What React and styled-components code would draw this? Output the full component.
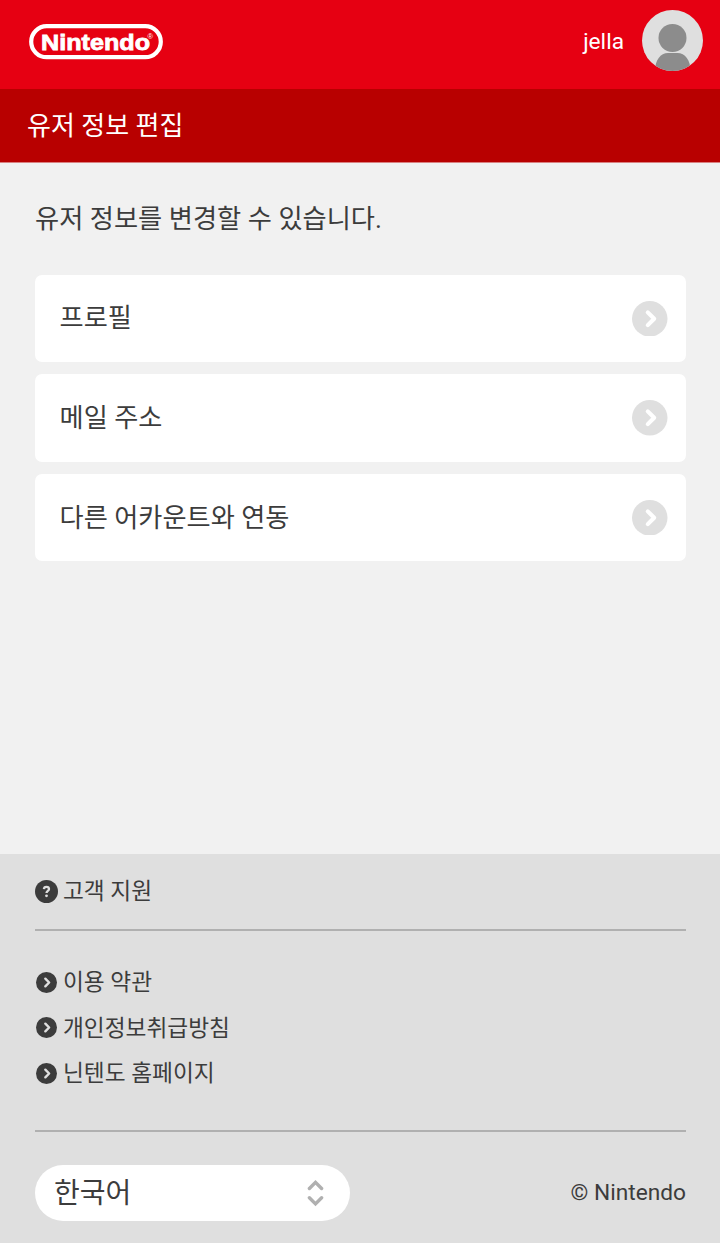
import React from "react";
import styled, { createGlobalStyle } from "styled-components";

const GlobalStyle = createGlobalStyle`
  *, *::before, *::after { box-sizing: border-box; }
  body {
    margin: 0;
    background: #f1f1f1;
    color: #3c3c3c;
    font-family: Roboto, "Noto Sans CJK KR", sans-serif;
    font-size: 26.2px;
    line-height: 38px;
  }
`;

const Page = styled.div`
  display: flex;
  flex-direction: column;
  min-height: 1243px;
`;

const Header = styled.header`
  display: flex;
  align-items: center;
  justify-content: space-between;
  height: 89px;
  padding: 0 17px 7px 29px;
  background: #e60012;
  color: #fff;
`;

const LogoSvg = styled.svg`
  display: block;
  width: 134px;
  height: 36px;
  margin-top: 2px;
`;

const Account = styled.div`
  display: flex;
  align-items: center;
  gap: 18px;
  font-size: 22.7px;
`;

const UserName = styled.span`
  padding-top: 1px;
`;

const AvatarSvg = styled.svg`
  display: block;
  width: 61px;
  height: 61px;
  margin-bottom: 1px;
`;

const TitleBar = styled.h1`
  display: flex;
  align-items: center;
  height: 73px;
  margin: 0;
  padding: 1px 27px 0;
  background: #b80000;
  color: #fff;
  font-size: 26px;
  font-weight: 400;
`;

const Main = styled.main`
  flex: 1;
  padding: 37px 34px 0 35px;
  border-top: 1px solid #d98080;
  background: #f1f1f1;
`;

const Intro = styled.p`
  margin: 0 0 36.8px;
  font-size: 26.25px;
`;

const Menu = styled.nav`
  display: flex;
  flex-direction: column;
  gap: 12.3px;
`;

const MenuItem = styled.a`
  display: flex;
  align-items: center;
  justify-content: space-between;
  height: 87.3px;
  padding: 0 18.5px 0 24.6px;
  border-radius: 7px;
  background: #fff;
`;

const Icon = styled.svg`
  display: block;
  flex: none;
  width: ${(p) => p.$size}px;
  height: ${(p) => p.$size}px;
`;

const Footer = styled.footer`
  height: 389px;
  padding: 0 34px 0 35px;
  background: #dfdfdf;
  font-size: 22.7px;
`;

const Support = styled.div`
  height: 77px;
  padding-top: 18px;
  border-bottom: 2px solid #b0b0b0;
`;

const Links = styled.div`
  display: flex;
  flex-direction: column;
  gap: 7.6px;
  height: 201px;
  padding-top: 32.3px;
  border-bottom: 2px solid #b0b0b0;
`;

const FooterLink = styled.a`
  display: flex;
  align-items: center;
  gap: 5px;
  height: 38px;
`;

const IconSlot = styled.span`
  display: flex;
  flex: none;
  justify-content: center;
  width: 23px;
`;

const FooterLabel = styled.span`
  margin-top: 2px;
`;

const BottomRow = styled.div`
  display: flex;
  align-items: center;
  justify-content: space-between;
  padding-top: 33px;
`;

const LanguageSelect = styled.button`
  display: flex;
  align-items: center;
  justify-content: space-between;
  width: 315px;
  height: 56px;
  padding: 0 26px 0 19px;
  border: 0;
  border-radius: 28px;
  background: #fff;
  color: #3c3c3c;
  font: inherit;
  font-size: 28px;
`;

const LanguageName = styled.span`
  padding-top: 1px;
`;

const SortSvg = styled.svg`
  display: block;
  width: 17px;
  height: 28px;
`;

function Logo() {
  return (
    <LogoSvg viewBox="0 0 134 36" role="img" aria-label="Nintendo">
      <rect x="2.2" y="2.2" width="129.6" height="31" rx="15.5" fill="none" stroke="#fff" strokeWidth="4.2" />
      <text
        x="12"
        y="26"
        fill="#fff"
        stroke="#fff"
        strokeWidth="0.8"
        fontFamily="'Liberation Sans', sans-serif"
        fontWeight="700"
        fontSize="22.5"
        textLength="109"
        lengthAdjust="spacingAndGlyphs"
      >
        Nintendo
      </text>
      <text x="118.6" y="14.8" fill="#fff" fontFamily="'Liberation Sans', sans-serif" fontSize="7.5">®</text>
    </LogoSvg>
  );
}

function Avatar() {
  return (
    <AvatarSvg viewBox="0 0 61 61">
      <clipPath id="avatar-circle"><circle cx="30.5" cy="30.5" r="30.5" /></clipPath>
      <g clipPath="url(#avatar-circle)">
        <rect width="61" height="61" fill="#dfdfdf" />
        <circle cx="30.5" cy="28" r="14" fill="#8c8c8c" />
        <path d="M13 61 C13 50 18.5 43 26 43 H35.5 C43 43 48.5 50 48.5 61 Z" fill="#8c8c8c" />
      </g>
    </AvatarSvg>
  );
}

function Chevron({ size, background, color }) {
  return (
    <Icon $size={size} viewBox="0 0 36 36">
      <circle cx="18" cy="18" r="18" fill={background} />
      <path d="M16 11.5 L22.5 18 L16 24.5" fill="none" stroke={color} strokeWidth="4.2" strokeLinecap="round" strokeLinejoin="round" />
    </Icon>
  );
}

function Question() {
  return (
    <Icon $size={23} viewBox="0 0 23 23">
      <circle cx="11.5" cy="11.5" r="11.5" fill="#3c3c3c" />
      <path d="M8.9 9.1 C9 7.5 10 6.8 11.4 6.8 C13 6.8 14 7.7 14 9 C14 10.8 11.5 10.9 11.5 13" fill="none" stroke="#dfdfdf" strokeWidth="2.3" />
      <circle cx="11.5" cy="15.8" r="1.4" fill="#dfdfdf" />
    </Icon>
  );
}

const menuItems = ["프로필", "메일 주소", "다른 어카운트와 연동"];
const footerLinks = ["이용 약관", "개인정보취급방침", "닌텐도 홈페이지"];

export default function App() {
  return (
    <>
      <GlobalStyle />
      <Page>
        <Header>
          <Logo />
          <Account>
            <UserName>jella</UserName>
            <Avatar />
          </Account>
        </Header>
        <TitleBar>유저 정보 편집</TitleBar>
        <Main>
          <Intro>유저 정보를 변경할 수 있습니다.</Intro>
          <Menu>
            {menuItems.map((label) => (
              <MenuItem key={label}>
                <span>{label}</span>
                <Chevron size={35.5} background="#dfdfdf" color="#fff" />
              </MenuItem>
            ))}
          </Menu>
        </Main>
        <Footer>
          <Support>
            <FooterLink>
              <IconSlot><Question /></IconSlot>
              <FooterLabel>고객 지원</FooterLabel>
            </FooterLink>
          </Support>
          <Links>
            {footerLinks.map((label) => (
              <FooterLink key={label}>
                <IconSlot><Chevron size={21} background="#3c3c3c" color="#dfdfdf" /></IconSlot>
                <FooterLabel>{label}</FooterLabel>
              </FooterLink>
            ))}
          </Links>
          <BottomRow>
            <LanguageSelect>
              <LanguageName>한국어</LanguageName>
              <SortSvg viewBox="0 0 17 28">
                <path d="M2.4 9.5 L8.5 3.4 L14.6 9.5 M2.4 18.8 L8.5 24.9 L14.6 18.8" fill="none" stroke="#b0b0b0" strokeWidth="3.4" strokeLinecap="round" />
              </SortSvg>
            </LanguageSelect>
            <span>© Nintendo</span>
          </BottomRow>
        </Footer>
      </Page>
    </>
  );
}
